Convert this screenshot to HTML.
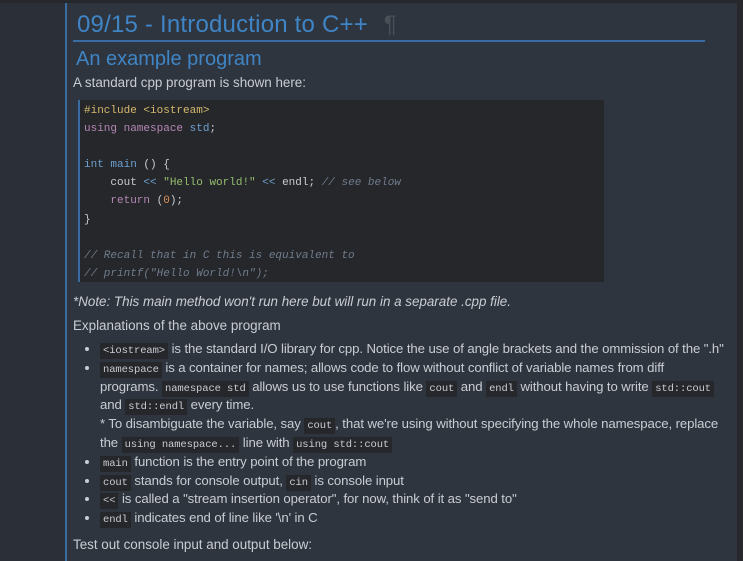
<!DOCTYPE html>
<html><head><meta charset="utf-8"><style>
html,body{margin:0;padding:0;width:743px;height:561px;overflow:hidden;background:#26282c;}
.left{position:absolute;left:0;top:3px;width:65px;height:558px;background:#2b3038;}
.main{position:absolute;left:65px;top:3px;width:672px;height:558px;background:#2f353e;border-left:2px solid #3a6ca4;box-sizing:border-box;}
.c{position:absolute;left:0;top:0;right:0;font-family:"Liberation Sans",sans-serif;color:#c9cdd3;}
h1{position:absolute;left:10px;top:8px;margin:0;font-weight:normal;font-size:24px;color:#3f85c6;white-space:nowrap;letter-spacing:0.2px}
h1 .p{color:#4a5058;margin-left:16px}
.rule{position:absolute;left:6px;top:37px;width:632px;height:2px;background:#3a6ca4}
h2{position:absolute;left:9px;top:45px;margin:0;font-weight:normal;font-size:20px;color:#3f85c6;}
.t{position:absolute;left:6px;font-size:13.4px;white-space:nowrap;}
pre{position:absolute;left:11px;top:97px;width:526px;height:182px;margin:0;background:#25272b;border-left:2px solid #3a6ca4;box-sizing:border-box;padding:2px 0 0 4px;font-family:"Liberation Mono",monospace;font-size:11px;line-height:18.1px;color:#c9cdd3;}
.k{color:#b588b5}.s{color:#96bd6e}.n{color:#d9905e}.y{color:#d5b86a}.b{color:#6da0cf}.cm{color:#707c8c;font-style:italic}
code{font-family:"Liberation Mono",monospace;font-size:10.5px;background:#25272b;padding:2px 3px;line-height:1;}
ul{position:absolute;left:20px;top:337px;margin:0;padding-left:13px;font-size:13.2px;line-height:18.8px;width:650px;letter-spacing:-0.1px}
li{margin:0;white-space:nowrap}
</style></head><body>
<div class="left"></div>
<div class="main"><div class="c">
<h1>09/15 - Introduction to C++<span class="p">¶</span></h1>
<div class="rule"></div>
<h2>An example program</h2>
<div class="t" style="top:72px">A standard cpp program is shown here:</div>
<pre><span class="y">#include &lt;iostream&gt;</span>
<span class="k">using namespace</span> <span class="b">std</span>;

<span class="b">int main</span> () {
    cout <span class="b">&lt;&lt;</span> <span class="s">"Hello world!"</span> <span class="b">&lt;&lt;</span> endl; <span class="cm">// see below</span>
    <span class="k">return</span> (<span class="n">0</span>);
}

<span class="cm">// Recall that in C this is equivalent to</span>
<span class="cm">// printf("Hello World!\n");</span></pre>
<div class="t" style="top:291px;font-style:italic">*Note: This main method won't run here but will run in a separate .cpp file.</div>
<div class="t" style="top:315px">Explanations of the above program</div>
<ul>
<li><code>&lt;iostream&gt;</code> is the standard I/O library for cpp. Notice the use of angle brackets and the ommission of the ".h"</li>
<li><code>namespace</code> is a container for names; allows code to flow without conflict of variable names from diff<br>programs. <code>namespace std</code> allows us to use functions like <code>cout</code> and <code>endl</code> without having to write <code>std::cout</code><br>and <code>std::endl</code> every time.<br>* To disambiguate the variable, say <code>cout</code>, that we're using without specifying the whole namespace, replace<br>the <code>using namespace...</code> line with <code>using std::cout</code></li>
<li><code>main</code> function is the entry point of the program</li>
<li><code>cout</code> stands for console output, <code>cin</code> is console input</li>
<li><code>&lt;&lt;</code> is called a "stream insertion operator", for now, think of it as "send to"</li>
<li><code>endl</code> indicates end of line like '\n' in C</li>
</ul>
<div class="t" style="top:534px">Test out console input and output below:</div>
</div></div>
</body></html>
